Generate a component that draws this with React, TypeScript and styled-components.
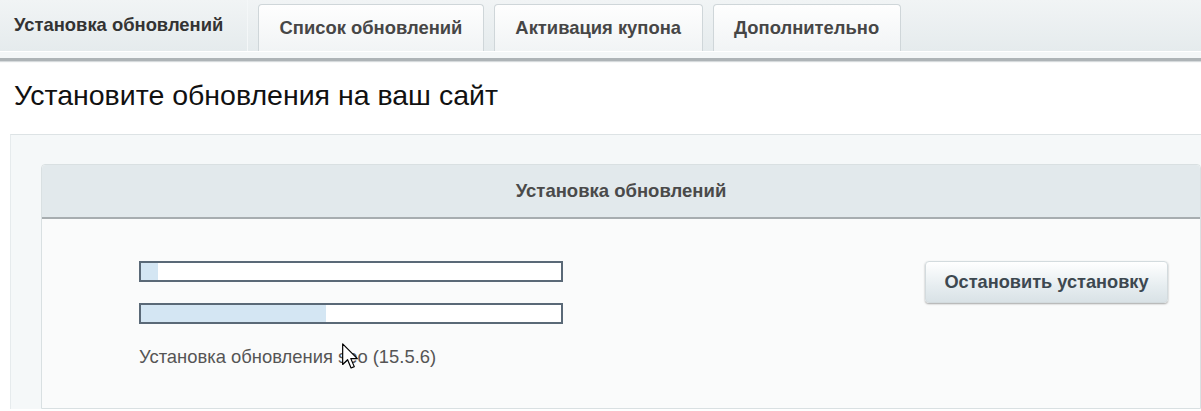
import styled, { createGlobalStyle } from "styled-components";

const Global = createGlobalStyle`
  body {
    margin: 0;
    background: #fff;
    font-family: "Liberation Sans", Arial, sans-serif;
  }
`;

const Page = styled.div`
  width: 1201px;
  height: 411px;
  overflow: hidden;
  position: relative;
`;

const TabBar = styled.div`
  display: flex;
  align-items: flex-end;
  gap: 10px;
  height: 51px;
  background: linear-gradient(#f1f4f5, #e5ebed);
`;

const Tab = styled.div<{ active?: boolean }>`
  display: flex;
  align-items: center;
  box-sizing: border-box;
  font-size: 18.4px;
  font-weight: bold;
  color: #333;
  ${(p) =>
    p.active
      ? `
    width: 248px;
    height: 51px;
    padding: 0 0 2px 14px;
    border-right: 1px solid #f4f7f8;
  `
      : `
    height: 47px;
    padding: 0 20.5px;
    justify-content: center;
    color: #464646;
    background: linear-gradient(#fefefe, #f1f4f5);
    border: 1px solid #cfd6d9;
    border-bottom: none;
    border-radius: 4px 4px 0 0;
  `}
`;

const TabUnderline = styled.div`
  height: 6px;
  background: #f4f7f8;
  border-top: 1px solid #fff;
  border-bottom: 3px solid #aeb4b7;
  box-shadow: 0 1px 1px #d6dadc;
`;

const Heading = styled.h1`
  margin: 0;
  padding: 17px 0 0 14px;
  font-size: 28.5px;
  font-weight: normal;
  line-height: 34px;
  color: #111;
`;

const Outer = styled.div`
  margin: 22px -40px 0 10px;
  padding: 29px 40px 0 30px;
  background: #f5f8f9;
  border-top: 1px solid #dde3e5;
  border-left: 1px solid #e6ebed;
`;

const Panel = styled.div`
  border: 1px solid #d9e0e2;
  border-radius: 4px 4px 0 0;
  background: #fafbfb;
`;

const PanelHeader = styled.div`
  height: 52px;
  display: flex;
  align-items: center;
  justify-content: center;
  background: #e2e9ec;
  border-bottom: 2px solid #a7adb0;
  border-radius: 4px 4px 0 0;
  font-size: 18.5px;
  font-weight: bold;
  color: #4a4a4a;
`;

const PanelBody = styled.div`
  display: flex;
  justify-content: space-between;
  align-items: flex-start;
  padding: 42px 32px 0 97px;
  height: 189px;
  box-sizing: border-box;
`;

const Bars = styled.div`
  display: flex;
  flex-direction: column;
  gap: 21px;
  width: 424px;
`;

const Bar = styled.div`
  height: 21px;
  box-sizing: border-box;
  border: 2px solid #5a6977;
  background: #fff;
`;

const Fill = styled.div`
  height: 100%;
  background: #d4e6f3;
`;

const Status = styled.div`
  position: relative;
  margin-top: 1px;
  font-size: 18.4px;
  color: #555;
`;

const Cursor = styled.svg`
  position: absolute;
  left: 203px;
  top: -3px;
`;

const Button = styled.button`
  width: 243px;
  height: 42px;
  border: 1px solid #d3dbde;
  border-radius: 4px;
  background: linear-gradient(#ffffff, #e6edf0 60%, #d9e2e6);
  box-shadow: 0 1px 2px rgba(0, 0, 0, 0.35);
  font-family: inherit;
  font-size: 18.2px;
  font-weight: bold;
  color: #3d4850;
`;

const progress = [4, 44];

export default function App() {
  return (
    <Page>
      <Global />
      <TabBar>
        <Tab active>Установка обновлений</Tab>
        <Tab>Список обновлений</Tab>
        <Tab>Активация купона</Tab>
        <Tab>Дополнительно</Tab>
      </TabBar>
      <TabUnderline />
      <Heading>Установите обновления на ваш сайт</Heading>
      <Outer>
        <Panel>
          <PanelHeader>Установка обновлений</PanelHeader>
          <PanelBody>
            <Bars>
              {progress.map((v, i) => (
                <Bar key={i}>
                  <Fill style={{ width: `${v}%` }} />
                </Bar>
              ))}
              <Status>
                Установка обновления seo (15.5.6)
                <Cursor width="16" height="27" viewBox="0 0 12 20">
                  <path
                    d="M0.5 0.5 L0.5 16 L4.2 12.4 L6.8 18.6 L9.2 17.6 L6.6 11.6 L11.5 11.6 Z"
                    fill="#fff"
                    stroke="#000"
                    strokeWidth="0.9"
                    strokeLinejoin="round"
                  />
                </Cursor>
              </Status>
            </Bars>
            <Button>Остановить установку</Button>
          </PanelBody>
        </Panel>
      </Outer>
    </Page>
  );
}
